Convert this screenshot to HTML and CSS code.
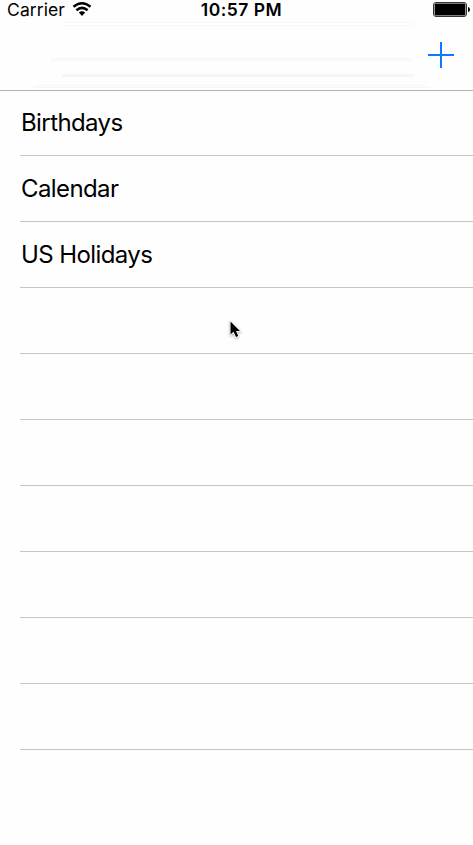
FILE: index.html
```html
<!DOCTYPE html>
<html lang="en">
<head>
<meta charset="utf-8">
<title>Calendars</title>
<link rel="stylesheet" href="styles.css">
</head>
<body>
<header class="header">
  <div class="status">
    <div class="carrier">
      <span class="carrier-name">Carrier</span>
      <svg class="wifi" width="20" height="16" viewBox="0 0 20 16" fill="none" stroke="#000" stroke-width="2.5">
        <path d="M1.5 5.8Q10 -1.4 18.5 5.8"/>
        <path d="M4.4 9.3Q10 4.4 15.6 9.3"/>
        <path d="M6.8 11.5Q10 9 13.2 11.5L10 14.9Z" fill="#000" stroke="none"/>
      </svg>
    </div>
    <time class="clock">10:57 PM</time>
    <svg class="battery" width="38" height="16" viewBox="0 0 38 16">
      <rect x=".5" y=".5" width="33" height="14" rx="2.5" fill="#fff" stroke="#333"/>
      <rect x="1.6" y="1.6" width="30.8" height="11.8" rx="1" fill="#000"/>
      <path d="M35 5Q37 5 37 7.5T35 10Z" fill="#000"/>
    </svg>
  </div>
  <nav class="navbar">
    <button class="add" aria-label="Add">
      <svg width="26" height="26" viewBox="0 0 26 26" stroke="#0a7aff" stroke-width="2"><path d="M0 13H26M13 0V26"/></svg>
    </button>
  </nav>
</header>
<main>
  <ul class="list">
    <li class="row">Birthdays</li>
    <li class="row">Calendar</li>
    <li class="row">US Holidays</li>
    <li class="row"></li>
    <li class="row"></li>
    <li class="row"></li>
    <li class="row"></li>
    <li class="row"></li>
    <li class="row"></li>
    <li class="row"></li>
  </ul>
</main>
<svg class="cursor" width="14" height="20" viewBox="0 0 14 20">
  <path d="M1.5 1.5V14.5L4.5 11.8L7 17L9.3 16L7 11H11Z" fill="#000" stroke="#fff" stroke-width="1.6" paint-order="stroke"/>
</svg>
</body>
</html>
```

FILE: styles.css
```css
* { box-sizing: border-box; }
body {
  margin: 0;
  min-height: 845px;
  background: #fefefe;
  color: #000;
  font-family: Inter, "Liberation Sans", sans-serif;
}
.header {
  height: 91px;
  border-bottom: 1px solid #b2b2b2;
  background:
    linear-gradient(#f6f6f6, #f6f6f6) 62px 22px / 351px 1px no-repeat,
    linear-gradient(#f6f6f6, #f6f6f6) 62px 25px / 351px 1px no-repeat,
    linear-gradient(#f6f6f6, #f6f6f6) 50px 58px / 363px 1px no-repeat,
    linear-gradient(#f6f6f6, #f6f6f6) 50px 60px / 363px 1px no-repeat,
    linear-gradient(#f6f6f6, #f6f6f6) 62px 74px / 351px 3px no-repeat,
    linear-gradient(#f6f6f6, #f6f6f6) 36px 85px / 390px 1px no-repeat,
    linear-gradient(#f6f6f6, #f6f6f6) 31px 87px / 400px 1px no-repeat,
    #fefefe;
}
.status {
  display: grid;
  grid-template-columns: 1fr auto 1fr;
  height: 20px;
  padding: 0 2px 0 7px;
}
.carrier { display: flex; line-height: 20px; font-size: 17.5px; }
.carrier-name { width: 65px; letter-spacing: 0.1px; }
.wifi { margin-top: 1px; }
.clock {
  margin-left: 5px;
  font-size: 17.5px;
  font-weight: 600;
  line-height: 20px;
  letter-spacing: 0.5px;
}
.battery { justify-self: end; margin-top: 2px; }
.navbar {
  display: flex;
  justify-content: flex-end;
  align-items: center;
  height: 70px;
  padding-right: 19px;
}
.add { display: flex; padding: 0; border: 0; background: none; }
.list { list-style: none; margin: 0; padding: 0 0 0 20px; }
.row {
  display: flex;
  align-items: center;
  height: 66px;
  padding-left: 1px;
  border-bottom: 1px solid #c6c6c6;
  font-size: 24px;
  letter-spacing: -0.6px;
}
.row:first-child { height: 65px; padding-bottom: 2px; }
.cursor {
  position: absolute;
  left: 229px;
  top: 320px;
  filter: drop-shadow(0 1px 1px rgba(0, 0, 0, 0.35));
}
```
